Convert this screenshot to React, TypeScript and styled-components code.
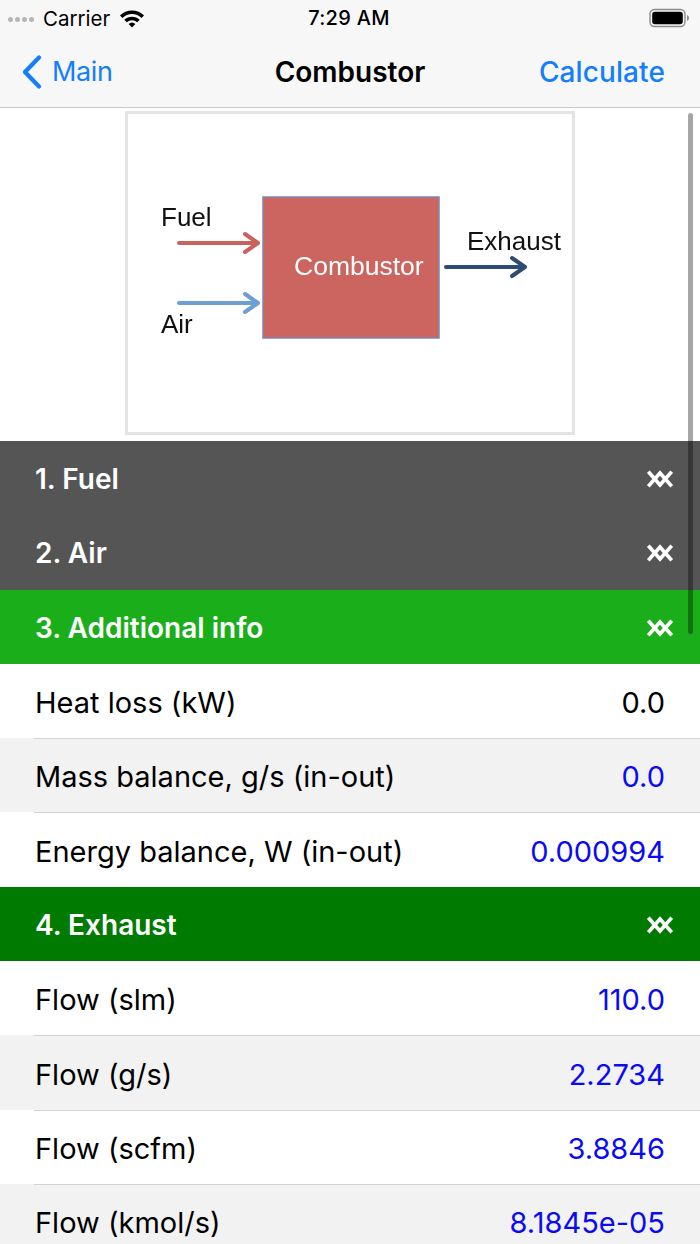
import React from "react";
import styled, { createGlobalStyle } from "styled-components";

const GlobalStyle = createGlobalStyle`
  html, body { margin: 0; padding: 0; background: #ffffff; }
  body { font-family: Inter, "Noto Sans", "Liberation Sans", sans-serif; -webkit-font-smoothing: antialiased; }
  * { box-sizing: border-box; }
`;

const Screen = styled.div`
  position: relative;
  width: 700px;
  height: 1244px;
  overflow: hidden;
  background: #ffffff;
`;

const TopBars = styled.header`
  background: #f7f7f7;
  border-bottom: 1px solid #c9c9c9;
`;

const StatusBar = styled.div`
  height: 36px;
  display: grid;
  grid-template-columns: 1fr auto 1fr;
  align-items: center;
  padding: 0 10px 0 8px;
  font-size: 20px;
  color: #000;
`;

const StatusLeft = styled.div`
  display: flex;
  align-items: center;
  gap: 9px;
`;

const Dots = styled.div`
  display: flex;
  gap: 2px;
  padding-top: 3px;
`;

const Dot = styled.span`
  width: 5px;
  height: 5px;
  border-radius: 50%;
  background: #b5b5b5;
`;

const Carrier = styled.span`
  font-weight: 400;
  font-size: 20.5px;
`;

const Time = styled.span`
  font-weight: 500;
  letter-spacing: 0.3px;
`;

const StatusRight = styled.div`
  display: flex;
  justify-content: flex-end;
  align-items: center;
`;

const NavBar = styled.nav`
  height: 71px;
  display: grid;
  grid-template-columns: 1fr auto 1fr;
  align-items: center;
  padding: 0 22px;
  font-size: 28px;
`;

const BackButton = styled.div`
  display: flex;
  align-items: center;
  gap: 10px;
  color: #147efb;
  font-size: 27px;
  letter-spacing: -0.4px;
`;

const NavTitle = styled.div`
  font-weight: 600;
  color: #000;
`;

const NavAction = styled.div`
  justify-self: end;
  margin-right: 13px;
  color: #147efb;
  font-weight: 500;
  letter-spacing: 0.1px;
`;

const Hero = styled.section`
  display: flex;
  justify-content: center;
  padding: 3px 0 6px;
  background: #fff;
`;

const Frame = styled.div`
  width: 450px;
  height: 324px;
  border: 3px solid #e4e4e4;
  background: #fff;
  filter: blur(0.35px);
`;

const Sections = styled.div`
  display: flex;
  flex-direction: column;
`;

const tones: Record<string, string> = {
  grey: "#555555",
  green: "#1aaf1a",
  dark: "#007a00",
};

const SectionHeader = styled.div<{ $tone: string }>`
  height: 74.3px;
  display: flex;
  align-items: center;
  justify-content: space-between;
  padding: 2px 27px 0 35px;
  background: ${(p) => tones[p.$tone]};
  color: #fff;
  font-size: 28px;
  font-weight: 600;
`;

const Row = styled.div<{ $alt?: boolean }>`
  height: 74.3px;
  padding-left: 34px;
  background: ${(p) => (p.$alt ? "#f2f2f2" : "#ffffff")};
`;

const RowInner = styled.div<{ $first?: boolean }>`
  height: 100%;
  display: flex;
  align-items: center;
  justify-content: space-between;
  padding: 2px 35px 0 1px;
  border-top: 1px solid ${(p) => (p.$first ? "transparent" : "#d3d3d3")};
  font-size: 29px;
  color: #000;
`;

const Value = styled.span<{ $calc?: boolean }>`
  color: ${(p) => (p.$calc ? "#0a0af5" : "#000")};
`;

const ScrollThumb = styled.div`
  position: absolute;
  left: 688px;
  top: 113px;
  width: 5px;
  height: 521px;
  border-radius: 3px;
  background: rgba(0, 0, 0, 0.35);
`;

const Wifi = () => (
  <svg width="26" height="19" viewBox="0 0 26 19">
    <path d="M1 6.5 A17 17 0 0 1 25 6.5 L22.5 9 A13.5 13.5 0 0 0 3.5 9 Z" fill="#000" />
    <path d="M5.3 10.8 A11 11 0 0 1 20.7 10.8 L18.2 13.3 A7.5 7.5 0 0 0 7.8 13.3 Z" fill="#000" />
    <path d="M9.6 15 A5 5 0 0 1 16.4 15 L13 18.5 Z" fill="#000" />
  </svg>
);

const Battery = () => (
  <svg width="41" height="20" viewBox="0 0 41 20">
    <rect x="1" y="1.5" width="35" height="17" rx="4.5" fill="none" stroke="#8a8a8a" strokeWidth="1.4" />
    <rect x="3.2" y="3.7" width="30.6" height="12.6" rx="2.8" fill="#000" />
    <path d="M38 7 Q40 7.5 40 10 Q40 12.5 38 13 Z" fill="#8a8a8a" />
  </svg>
);

const Chevron = () => (
  <svg width="20" height="34" viewBox="0 0 20 34">
    <path d="M17 2.5 L3 17 L17 31.5" fill="none" stroke="#147efb" strokeWidth="4.2" strokeLinecap="round" strokeLinejoin="round" />
  </svg>
);

const CollapseIcon = () => (
  <svg width="26" height="18" viewBox="0 0 26 18">
    <path d="M2.5 3 L13 15 L23.5 3" fill="none" stroke="#fff" strokeWidth="3.6" strokeLinecap="square" strokeLinejoin="miter" />
    <path d="M2.5 15 L13 3 L23.5 15" fill="none" stroke="#fff" strokeWidth="3.6" strokeLinecap="square" strokeLinejoin="miter" />
  </svg>
);

const Arrow = ({ x1, x2, y, color }: { x1: number; x2: number; y: number; color: string }) => (
  <g stroke={color} strokeWidth="4" fill="none" strokeLinecap="round" strokeLinejoin="round">
    <line x1={x1} y1={y} x2={x2 - 2} y2={y} />
    <polyline points={`${x2 - 13},${y - 9} ${x2},${y} ${x2 - 13},${y + 9}`} />
  </g>
);

const Diagram = () => (
  <svg width="444" height="318" viewBox="3 3 444 318" style={{ display: "block" }}>
    <rect x="138" y="86" width="176" height="141" fill="#cc6460" stroke="#7d86ad" strokeWidth="1.5" />
    <g fontFamily='"Liberation Sans", Arial, sans-serif' fontSize="26">
      <text x="36" y="115" fill="#111">Fuel</text>
      <text x="36" y="222" fill="#111">Air</text>
      <text x="342" y="139" fill="#111">Exhaust</text>
      <text x="169" y="164" fill="#fff" fontSize="26.5">Combustor</text>
    </g>
    <Arrow x1={54} x2={133} y={132} color="#c9625d" />
    <Arrow x1={54} x2={133} y={192} color="#6c9fd2" />
    <Arrow x1={321} x2={400} y={156} color="#2d4c74" />
  </svg>
);

type RowData = { label: string; value: string; calc?: boolean };

const additional: RowData[] = [
  { label: "Heat loss (kW)", value: "0.0" },
  { label: "Mass balance, g/s (in-out)", value: "0.0", calc: true },
  { label: "Energy balance, W (in-out)", value: "0.000994", calc: true },
];

const exhaust: RowData[] = [
  { label: "Flow (slm)", value: "110.0", calc: true },
  { label: "Flow (g/s)", value: "2.2734", calc: true },
  { label: "Flow (scfm)", value: "3.8846", calc: true },
  { label: "Flow (kmol/s)", value: "8.1845e-05", calc: true },
];

const Rows = ({ data }: { data: RowData[] }) => (
  <>
    {data.map((r, i) => (
      <Row key={r.label} $alt={i % 2 === 1}>
        <RowInner $first={i === 0}>
          <span>{r.label}</span>
          <Value $calc={r.calc}>{r.value}</Value>
        </RowInner>
      </Row>
    ))}
  </>
);

const Header = ({ title, tone }: { title: string; tone: string }) => (
  <SectionHeader $tone={tone}>
    <span>{title}</span>
    <CollapseIcon />
  </SectionHeader>
);

export default function App() {
  return (
    <>
      <GlobalStyle />
      <Screen>
        <TopBars>
          <StatusBar>
            <StatusLeft>
              <Dots>
                <Dot />
                <Dot />
                <Dot />
                <Dot />
              </Dots>
              <Carrier>Carrier</Carrier>
              <Wifi />
            </StatusLeft>
            <Time>7:29 AM</Time>
            <StatusRight>
              <Battery />
            </StatusRight>
          </StatusBar>
          <NavBar>
            <BackButton>
              <Chevron />
              <span>Main</span>
            </BackButton>
            <NavTitle>Combustor</NavTitle>
            <NavAction>Calculate</NavAction>
          </NavBar>
        </TopBars>
        <Hero>
          <Frame>
            <Diagram />
          </Frame>
        </Hero>
        <Sections>
          <Header title="1. Fuel" tone="grey" />
          <Header title="2. Air" tone="grey" />
          <Header title="3. Additional info" tone="green" />
          <Rows data={additional} />
          <Header title="4. Exhaust" tone="dark" />
          <Rows data={exhaust} />
        </Sections>
        <ScrollThumb />
      </Screen>
    </>
  );
}
